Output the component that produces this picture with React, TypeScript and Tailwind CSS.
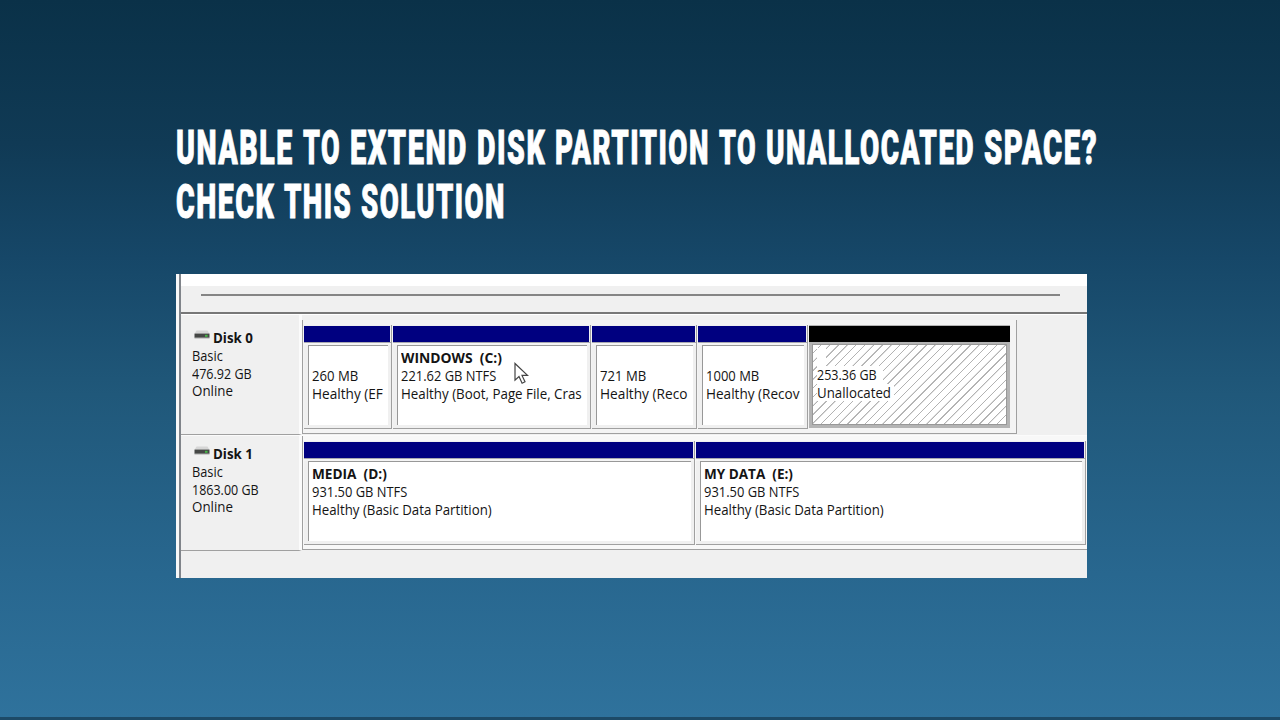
import React, { useLayoutEffect, useRef, useState } from "react";

type FitProps = { text: string; width: number; className?: string };

// Squeezes or stretches a single line of text to a known width
const Fit = ({ text, width, className = "" }: FitProps) => {
  const ref = useRef<HTMLSpanElement>(null);
  const [scale, setScale] = useState(1);

  useLayoutEffect(() => {
    if (ref.current) setScale(width / ref.current.offsetWidth);
  }, [text, width]);

  return (
    <span className={`block whitespace-pre ${className}`} style={{ width }}>
      <span
        ref={ref}
        className="inline-block origin-left align-top"
        style={{ transform: `scaleX(${scale})` }}
      >
        {text}
      </span>
    </span>
  );
};

type Line = { text: string; width: number; bold?: boolean };

type Partition = {
  id: string;
  cell: string;
  lines: Line[];
};

const titleLines = [
  [
    { text: "UNABLE", width: 118 },
    { text: "TO", width: 38 },
    { text: "EXTEND", width: 118 },
    { text: "DISK", width: 69 },
    { text: "PARTITION", width: 155 },
    { text: "TO", width: 38 },
    { text: "UNALLOCATED", width: 209 },
    { text: "SPACE?", width: 114 },
  ],
  [
    { text: "CHECK", width: 99 },
    { text: "THIS", width: 68 },
    { text: "SOLUTION", width: 145 },
  ],
];

const disk0: Partition[] = [
  {
    id: "efi",
    cell: "w-[88px]",
    lines: [
      { text: " ", width: 8 },
      { text: "260 MB", width: 46 },
      { text: "Healthy (EF", width: 71 },
    ],
  },
  {
    id: "c",
    cell: "w-[198px]",
    lines: [
      { text: "WINDOWS  (C:)", width: 101, bold: true },
      { text: "221.62 GB NTFS", width: 95 },
      { text: "Healthy (Boot, Page File, Cras", width: 181 },
    ],
  },
  {
    id: "rec1",
    cell: "w-[105px]",
    lines: [
      { text: " ", width: 8 },
      { text: "721 MB", width: 46 },
      { text: "Healthy (Reco", width: 87 },
    ],
  },
  {
    id: "rec2",
    cell: "w-[110px]",
    lines: [
      { text: " ", width: 8 },
      { text: "1000 MB", width: 53 },
      { text: "Healthy (Recov", width: 93 },
    ],
  },
];

const disk1: Partition[] = [
  {
    id: "d",
    cell: "w-[391px]",
    lines: [
      { text: "MEDIA  (D:)", width: 75, bold: true },
      { text: "931.50 GB NTFS", width: 95 },
      { text: "Healthy (Basic Data Partition)", width: 180 },
    ],
  },
  {
    id: "e",
    cell: "w-[390px]",
    lines: [
      { text: "MY DATA  (E:)", width: 89, bold: true },
      { text: "931.50 GB NTFS", width: 95 },
      { text: "Healthy (Basic Data Partition)", width: 180 },
    ],
  },
];

const DiskIcon = () => (
  <svg width="16" height="10" viewBox="0 0 16 10" className="mt-px shrink-0">
    <path d="M2.5 0.5H13.5L15.5 4H0.5Z" fill="#d6d6d6" />
    <rect x="0.5" y="3.6" width="15" height="4.2" fill="#454745" />
    <rect x="0.5" y="7.8" width="15" height="1" fill="#c4c4c4" />
    <rect x="11" y="4.8" width="2.6" height="2" fill="#45b545" />
  </svg>
);

const Cursor = () => (
  <svg
    width="16"
    height="24"
    viewBox="0 0 16 24"
    className="absolute left-[121px] top-[37px]"
  >
    <path
      d="M1 1.5V18.2L5 14.6L8.1 21.2L11 19.8L8 13.4H13.5Z"
      fill="#fff"
      stroke="#444"
      strokeWidth="1.2"
    />
  </svg>
);

const DiskHeader = ({
  name,
  size,
  sizeWidth,
  className,
}: {
  name: string;
  size: string;
  sizeWidth: number;
  className: string;
}) => (
  <div
    className={`w-[121px] shrink-0 border-b border-r-[3px] border-b-[#a0a0a0] border-r-[#fbfbfb] bg-[#f0f0f0] pl-[11px] ${className}`}
  >
    <div className="flex pl-[2px]">
      <DiskIcon />
      <Fit text={name} width={40} className="ml-[3px] font-bold" />
    </div>
    <Fit text="Basic" width={31} />
    <Fit text={size} width={sizeWidth} />
    <Fit text="Online" width={41} />
  </div>
);

const PartitionCell = ({
  partition,
  children,
}: {
  partition: Partition;
  children?: React.ReactNode;
}) => (
  <div
    className={`relative flex h-[104px] shrink-0 flex-col border-b border-r border-[#a0a0a0] bg-[#f0f0f0] ${partition.cell}`}
  >
    <div className="mr-px mt-px h-[16px] bg-[#000080]" />
    <div className="h-px bg-[#a8a8b0]" />
    <div className="h-[2px] bg-[#f4f4f4]" />
    <div className="ml-[4px] mr-[3px] h-[80px] border-l border-t border-[#989898] bg-white pl-[3px] pt-[3px]">
      {partition.lines.map((line, i) => (
        <Fit
          key={i}
          text={line.text}
          width={line.width}
          className={line.bold ? "font-bold" : ""}
        />
      ))}
    </div>
    {children}
  </div>
);

const Unallocated = () => (
  <div className="flex h-[103px] w-[201px] shrink-0 flex-col bg-[#b4b4b4] pt-px">
    <div className="h-[16px] bg-black" />
    <div className="mx-[3px] mt-[2px] h-[81px] border border-[#989898] bg-[repeating-linear-gradient(135deg,#fff_0px,#fff_5px,#b2b2b2_5.3px,#b2b2b2_6px,#fff_6.22px)] pl-[4px] pt-[3px]">
      <div className="w-[9px] bg-white">
        <Fit text=" " width={8} />
      </div>
      <div className="w-[66px] bg-white">
        <Fit text="253.36 GB" width={60} />
      </div>
      <div className="w-[77px] bg-white">
        <Fit text="Unallocated" width={74} />
      </div>
    </div>
  </div>
);

const DiskManager = () => (
  <div className="ml-[176px] mt-[45px] flex h-[304px] w-[911px] overflow-hidden bg-[#f0f0f0] font-['Open_Sans','Noto_Sans',sans-serif] text-[14px] leading-[17.8px] text-[#141414]">
    <div className="w-[3px] bg-[#f8f8f8]" />
    <div className="w-[2px] bg-[#80848a]" />
    <div className="w-[906px]">
      <div className="h-[12px] bg-white" />
      <div className="h-[26px] pl-[20px] pt-[8px]">
        <div className="h-[2px] w-[859px] bg-[#858585]" />
      </div>
      <div className="h-[2px] bg-[#777]" />
      <div className="h-px bg-white" />

      <div className="flex h-[120px]">
        <DiskHeader
          name="Disk 0"
          size="476.92 GB"
          sizeWidth={60}
          className="pt-[14px]"
        />
        <div className="mt-[5px] flex h-[114px] w-[715px] gap-px border-b border-l border-r border-[#a0a0a0] bg-[#f4f4f4] pl-px pt-[5px]">
          {disk0.map((p) => (
            <PartitionCell key={p.id} partition={p}>
              {p.id === "c" && <Cursor />}
            </PartitionCell>
          ))}
          <Unallocated />
        </div>
      </div>

      <div className="flex h-[116px] border-t border-[#fbfbfb]">
        <DiskHeader
          name="Disk 1"
          size="1863.00 GB"
          sizeWidth={67}
          className="pt-[9px]"
        />
        <div className="flex h-[114px] w-[785px] gap-px border-b border-l border-[#a0a0a0] bg-[#f8f8f8] pl-px pt-[5px]">
          {disk1.map((p) => (
            <PartitionCell key={p.id} partition={p} />
          ))}
        </div>
      </div>
    </div>
  </div>
);

export default function App() {
  return (
    <div className="flex h-[720px] w-[1280px] flex-col overflow-hidden border-b-[3px] border-[#1d4a67] bg-[linear-gradient(180deg,#0a3148_0%,#103a55_20%,#164768_36%,#20587a_55%,#28678f_80%,#2f729c_100%)]">
      <h1 className="pl-[176px] pt-[121px] font-['Roboto',sans-serif] text-[47.5px] font-black leading-[54px] tracking-[2.5px] text-white [-webkit-text-stroke:0.9px_white]">
        {titleLines.map((words, i) => (
          <span key={i} className="flex gap-[9px]">
            {words.map((word, j) => (
              <Fit key={j} text={word.text} width={word.width} />
            ))}
          </span>
        ))}
      </h1>
      <DiskManager />
    </div>
  );
}
